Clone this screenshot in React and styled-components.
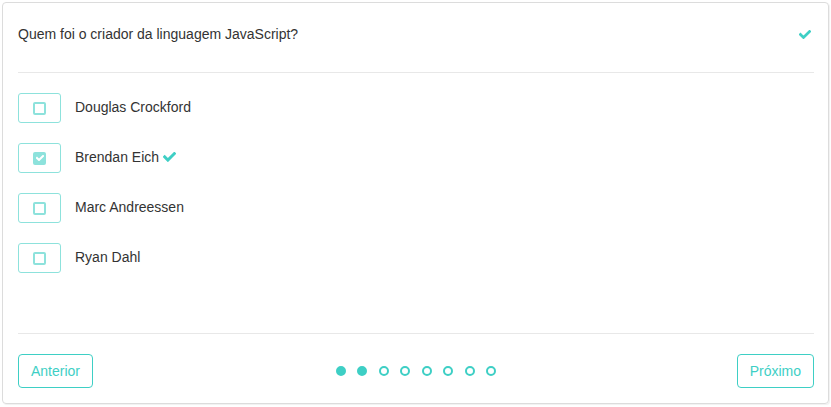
import React from "react"
import styled, { createGlobalStyle } from "styled-components"

const teal = "#3ecfc5"
const tealLight = "#8de2dc"

const GlobalStyle = createGlobalStyle`
  body {
    margin: 0;
    font-family: "Liberation Sans", Arial, sans-serif;
    background: #fff;
  }
`

const Card = styled.div`
  margin: 2px;
  height: 402px;
  box-sizing: border-box;
  border: 1px solid #dcdcdc;
  border-radius: 4px;
  box-shadow: 1px 1px 1px rgba(0, 0, 0, 0.06);
  padding: 0 14px 0 15px;
  display: flex;
  flex-direction: column;
  color: #333;
  font-size: 14px;
`

const Header = styled.div`
  display: flex;
  align-items: center;
  justify-content: space-between;
  line-height: 20px;
  padding: 21px 3px 28px 0;
  border-bottom: 1px solid #e8e8e8;
`

const Options = styled.div`
  flex: 1;
  display: flex;
  flex-direction: column;
  gap: 20px;
  padding-top: 20px;
  border-bottom: 1px solid #e8e8e8;
`

const Row = styled.label`
  display: flex;
  align-items: center;
  gap: 14px;
  height: 30px;
  line-height: 20px;
`

const Label = styled.span`
  margin-bottom: 2px;
`

const Box = styled.span`
  width: 43px;
  height: 30px;
  box-sizing: border-box;
  border: 1px solid ${tealLight};
  border-radius: 3px;
  display: flex;
  align-items: center;
  justify-content: center;
`

const Tick = styled.span`
  width: 13px;
  height: 13px;
  box-sizing: border-box;
  border-radius: 2px;
  border: 2px solid ${tealLight};
  background: ${(p) => (p.checked ? tealLight : "#fff")};
  display: flex;
  align-items: center;
  justify-content: center;
`

const Footer = styled.div`
  display: grid;
  grid-template-columns: 1fr auto 1fr;
  align-items: center;
  padding: 20px 0 15px;
`

const NavButton = styled.button`
  justify-self: ${(p) => (p.right ? "end" : "start")};
  height: 34px;
  padding: 0 12px;
  background: #fff;
  border: 1px solid ${teal};
  border-radius: 4px;
  color: ${teal};
  font-family: inherit;
  font-size: 14px;
  cursor: pointer;
`

const Dots = styled.div`
  display: flex;
  gap: 11.5px;
`

const Dot = styled.span`
  width: 10px;
  height: 10px;
  box-sizing: border-box;
  border-radius: 50%;
  border: 2px solid ${teal};
  background: ${(p) => (p.filled ? teal : "#fff")};
`

const Check = ({ size = 13, color = teal, stroke = 3.6 }) => (
  <svg width={size} height={size * 0.75} viewBox="0 0 16 12">
    <polyline
      points="2,6 6,10 14,2"
      fill="none"
      stroke={color}
      strokeWidth={stroke}
      strokeLinecap="square"
    />
  </svg>
)

const options = [
  { label: "Douglas Crockford" },
  { label: "Brendan Eich", checked: true },
  { label: "Marc Andreessen" },
  { label: "Ryan Dahl" },
]

export default function App() {
  return (
    <>
      <GlobalStyle />
      <Card>
        <Header>
          <span>Quem foi o criador da linguagem JavaScript?</span>
          <Check size={12} />
        </Header>
        <Options>
          {options.map((o) => (
            <Row key={o.label}>
              <Box>
                <Tick checked={o.checked}>
                  {o.checked && <Check size={8} color="#fff" stroke={4} />}
                </Tick>
              </Box>
              <Label>
                {o.label} {o.checked && <Check size={13} />}
              </Label>
            </Row>
          ))}
        </Options>
        <Footer>
          <NavButton>Anterior</NavButton>
          <Dots>
            {[0, 1, 2, 3, 4, 5, 6, 7].map((i) => (
              <Dot key={i} filled={i < 2} />
            ))}
          </Dots>
          <NavButton right>Próximo</NavButton>
        </Footer>
      </Card>
    </>
  )
}
